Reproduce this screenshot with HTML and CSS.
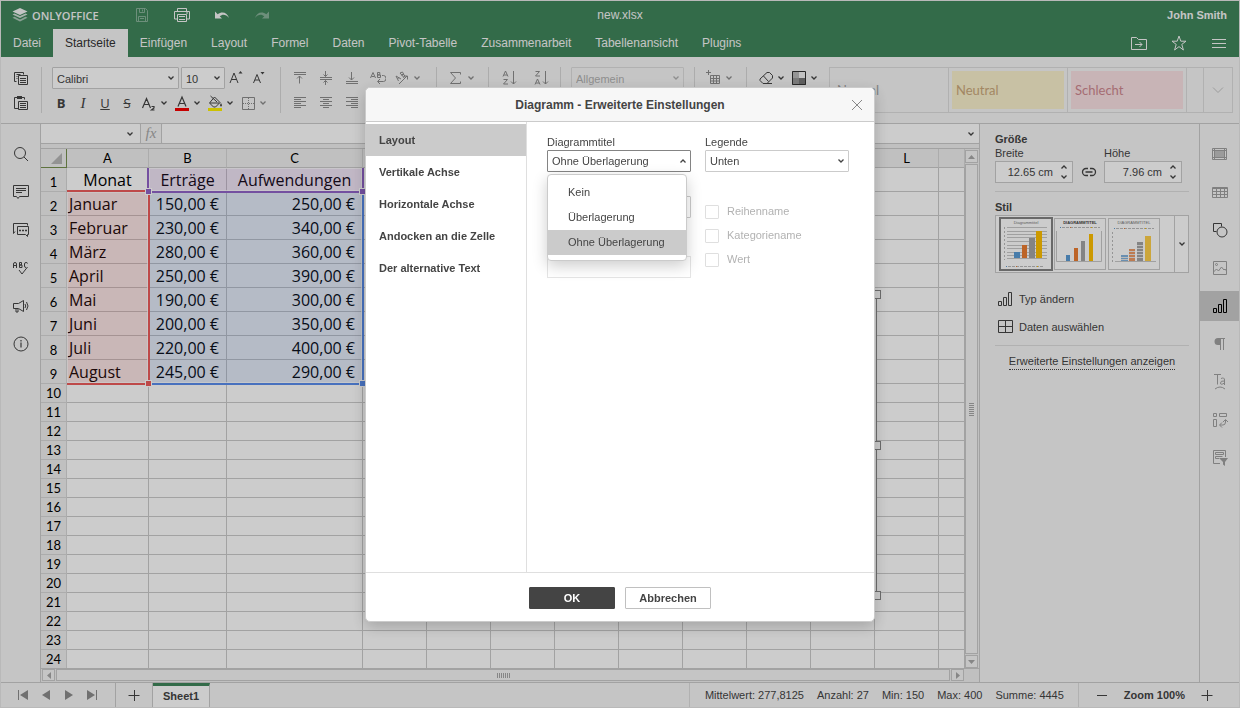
FILE: index.html
```html
<!DOCTYPE html>
<html lang="de">
<head>
    <meta charset="UTF-8">
    <title>new.xlsx</title>
    <link rel="stylesheet" href="styles.css">
</head>
<body>
    <svg class="sprite" aria-hidden="true">
        <symbol id="chev" viewBox="0 0 8 8"><path d="M1.500 2.500L4 5l2.500-2.500" fill="none" stroke="currentColor" stroke-width="1.300"/></symbol>
        <symbol id="bars" viewBox="0 0 20 20"><path d="M3.500 12.500h3v4h-3zM8.500 8.500h3v8h-3zM13.500 3.500h3v13h-3z" fill="none" stroke="currentColor"/></symbol>
    </svg>

    <div class="app">
        <header class="header">
            <div class="title_bar">
                <div class="title_left">
                    <a class="logo" href="#">
                        <svg width="16" height="16" viewBox="0 0 16 16" fill="#f7f7f7"><path d="M8 1l7.500 3.500L8 8 .5 4.500z"/><path d="M.5 7.500l2-1L8 9.100l5.500-2.600 2 1L8 11z" opacity=".8"/><path d="M.5 10.800l2-1L8 12.400l5.500-2.600 2 1L8 14.500z" opacity=".6"/></svg>
                        <span>ONLYOFFICE</span>
                    </a>
                    <button class="head_btn faded" aria-label="Speichern"><svg width="16" height="16" viewBox="0 0 16 16" fill="none" stroke="currentColor"><path d="M2.500 1.500h9l2 2v11h-11v-13zM5.500 1.500v4h5v-4M8.500 2.500v2M4.500 14.500v-5h7v5M6 11.500h4"/></svg></button>
                    <button class="head_btn" aria-label="Drucken"><svg width="18" height="16" viewBox="0 0 18 16" fill="none" stroke="currentColor"><path d="M4.500 4V1.500h9V4M4.500 12h-3V4.500h15V12h-3M4.500 7.500h9v7h-9zM6 9.500h6M6 12.500h6M13 6h2"/></svg></button>
                    <button class="head_btn" aria-label="Rückgängig"><svg width="16" height="16" viewBox="0 0 16 16" fill="currentColor"><path d="M1 4.500v7h7L5.700 9.200C8.500 6.800 12 7 15 11 13.500 5.500 8 3.800 3.700 7.200z"/></svg></button>
                    <button class="head_btn faded" aria-label="Wiederholen"><svg width="16" height="16" viewBox="0 0 16 16" fill="currentColor"><path d="M15 4.500v7H8l2.300-2.300C7.500 6.800 4 7 1 11 2.500 5.500 8 3.800 12.300 7.200z"/></svg></button>
                </div>
                <div class="doc_name">new.xlsx</div>
                <div class="user_name">John Smith</div>
            </div>
            <nav class="tabs">
                <a href="#">Datei</a>
                <a href="#" class="active">Startseite</a>
                <a href="#">Einfügen</a>
                <a href="#">Layout</a>
                <a href="#">Formel</a>
                <a href="#">Daten</a>
                <a href="#">Pivot-Tabelle</a>
                <a href="#">Zusammenarbeit</a>
                <a href="#">Tabellenansicht</a>
                <a href="#">Plugins</a>
                <div class="tabs_right">
                    <button class="head_btn" aria-label="Dateispeicherort öffnen"><svg width="18" height="16" viewBox="0 0 18 16" fill="none" stroke="currentColor"><path d="M1.500 14.500v-12h5l2 2h8v10zM5 9.500h7M9.500 7l2.500 2.500L9.500 12"/></svg></button>
                    <button class="head_btn" aria-label="Favorit"><svg width="16" height="16" viewBox="0 0 16 16" fill="none" stroke="currentColor"><path d="M8 1l1.800 5.200H15l-4.200 3.200L12.400 15 8 11.600 3.600 15l1.600-5.600L1 6.200h5.200z"/></svg></button>
                    <button class="head_btn" aria-label="Menü"><svg width="16" height="16" viewBox="0 0 16 16" fill="none" stroke="currentColor"><path d="M1 4.500h14M1 8.500h14M1 12.500h14"/></svg></button>
                </div>
            </nav>
        </header>

        <div class="toolbar">
            <div class="group group_copy">
                <div class="tb_row"><button class="tb_btn" aria-label="Kopieren"><svg width="16" height="16" viewBox="0 0 16 16" fill="none" stroke="currentColor"><path d="M3.500 11.500h-2v-9h9v2M3.500 4.500h4M3.500 6.500h1M3.500 8.500h1M5.500 5.500h9v9h-9zM7 8.500h6M7 10.500h6M7 12.500h6"/></svg></button></div>
                <div class="tb_row"><button class="tb_btn" aria-label="Einfügen"><svg width="16" height="16" viewBox="0 0 16 16" fill="none" stroke="currentColor"><path d="M5 13.500H1.500v-11h10v2M5.500 6.500h9v8h-9zM7 8.500h6M7 10.500h6M7 12.500h6"/><path d="M4 1h5v3H4z" fill="currentColor" stroke="none"/></svg></button></div>
            </div>
            <div class="group group_font">
                <div class="tb_row tb_fields">
                    <label class="combo combo_font"><select aria-label="Schriftart"><option>Calibri</option></select><svg class="chev"><use href="#chev"/></svg></label>
                    <label class="combo combo_size"><select aria-label="Schriftgröße"><option>10</option></select><svg class="chev"><use href="#chev"/></svg></label>
                    <button class="tb_btn" aria-label="Größer"><svg width="16" height="16" viewBox="0 0 16 16" fill="none" stroke="currentColor"><path d="M2 13l4-10 4 10M3.500 9.500h5"/><path d="M10.500 3.500h4l-2-2.500z" fill="currentColor" stroke="none"/></svg></button>
                    <button class="tb_btn" aria-label="Kleiner"><svg width="16" height="16" viewBox="0 0 16 16" fill="none" stroke="currentColor"><path d="M3.500 13L7 4.500l3.500 8.500M5 10h4"/><path d="M10.500 2h4l-2 2.500z" fill="currentColor" stroke="none"/></svg></button>
                </div>
                <div class="tb_row">
                    <button class="tb_btn letter"><b>B</b></button>
                    <button class="tb_btn letter serif"><i>I</i></button>
                    <button class="tb_btn letter"><u>U</u></button>
                    <button class="tb_btn letter"><s>S</s></button>
                    <button class="tb_split"><svg width="18" height="16" viewBox="2 0 18 16" fill="none" stroke="currentColor"><path d="M3.500 13l4-9.500 4 9.500M5 9.500h5M12.500 11.500h2.500v1.500l-2.500 2h3" stroke-width="1.200"/></svg><svg class="chev"><use href="#chev"/></svg></button>
                    <button class="tb_split"><svg width="16" height="16" viewBox="0 0 16 16"><path d="M4 11.500L8 2l4 9.500M5.500 8.500h5" fill="none" stroke="currentColor" stroke-width="1.200"/><path d="M1 13h14v3H1z" fill="#f80000"/></svg><svg class="chev"><use href="#chev"/></svg></button>
                    <button class="tb_split"><svg width="16" height="16" viewBox="0 0 16 16"><path d="M7.500 2l5.500 5.500-4.500 4.500H6.500L2.500 8zM3.500 1L10 7M3 8h9.500" fill="none" stroke="currentColor"/><path d="M14 8c1.500 2.500 1 3.500 0 3.500s-1.500-1 0-3.500z" fill="currentColor"/><path d="M1 13h14v3H1z" fill="#fff200"/></svg><svg class="chev"><use href="#chev"/></svg></button>
                    <button class="tb_split muted"><svg width="16" height="16" viewBox="0 0 16 16" fill="none" stroke="currentColor"><path d="M2.500 2.500h12v12h-12z"/><path d="M8.500 3v12M3 8.500h12" stroke-dasharray="1 1"/></svg><svg class="chev"><use href="#chev"/></svg></button>
                </div>
            </div>
            <div class="group group_align muted">
                <div class="tb_row">
                    <button class="tb_btn" aria-label="Oben"><svg width="14" height="14" viewBox="0 0 14 14" fill="none" stroke="currentColor"><path d="M1 1.500h12M1 3.500h12M6.500 12.500V5M4 7.500L6.500 5 9 7.500"/></svg></button>
                    <button class="tb_btn" aria-label="Mitte"><svg width="14" height="14" viewBox="0 0 14 14" fill="none" stroke="currentColor"><path d="M1 6.500h12M1 8.500h12M6.500 0v5.500M4.500 3.500l2 2 2-2M6.500 14V9.500M4.500 11.500l2-2 2 2"/></svg></button>
                    <button class="tb_btn" aria-label="Unten"><svg width="14" height="14" viewBox="0 0 14 14" fill="none" stroke="currentColor"><path d="M1 10.500h12M1 12.500h12M6.500 1v8M4 6.500L6.500 9 9 6.500"/></svg></button>
                    <button class="tb_btn" aria-label="Zeilenumbruch"><svg width="16" height="14" viewBox="0 0 16 14" fill="none" stroke="currentColor"><path d="M.5 7L3 1.500 5.500 7M1.500 5.500h3M7.500 1.500v5M7.500 1.500h2.300v2.300H7.500M7.500 4h3v2.500h-3M12 4.500h1.500a2.500 3 0 0 1 0 6H8M10 8l-2.500 2.500L10 13"/></svg></button>
                    <button class="tb_split"><svg width="16" height="14" viewBox="0 0 16 14" fill="none" stroke="currentColor"><path d="M2 5l5 3M2 5l2.500 5M5 6.500L3.500 8M6 2l3.500 4M6 2l2.500-1 1 2-2 1 2.500-.5 1 2-2 1M5 13l8-8M10 5h3.500v3.500"/></svg><svg class="chev"><use href="#chev"/></svg></button>
                </div>
                <div class="tb_row">
                    <button class="tb_btn" aria-label="Linksbündig"><svg width="14" height="14" viewBox="0 0 14 14" fill="none" stroke="currentColor"><path d="M1 1.500h12M1 3.500h7M1 5.500h12M1 7.500h7M1 9.500h12M1 11.500h7"/></svg></button>
                    <button class="tb_btn" aria-label="Zentriert"><svg width="14" height="14" viewBox="0 0 14 14" fill="none" stroke="currentColor"><path d="M1 1.500h12M4 3.500h6M1 5.500h12M4 7.500h6M1 9.500h12M4 11.500h6"/></svg></button>
                    <button class="tb_btn" aria-label="Rechtsbündig"><svg width="14" height="14" viewBox="0 0 14 14" fill="none" stroke="currentColor"><path d="M1 1.500h12M6 3.500h7M1 5.500h12M6 7.500h7M1 9.500h12M6 11.500h7"/></svg></button>
                </div>
            </div>
            <div class="group muted">
                <div class="tb_row"><button class="tb_split"><svg width="16" height="16" viewBox="0 0 16 16" fill="none" stroke="currentColor"><path d="M12.500 4.500v-2h-10l5 5.500-5 5.500h10v-2"/></svg><svg class="chev"><use href="#chev"/></svg></button></div>
            </div>
            <div class="group group_sort muted">
                <div class="tb_row">
                    <button class="tb_btn" aria-label="Aufsteigend"><svg width="16" height="16" viewBox="0 0 16 16" fill="none" stroke="currentColor"><path d="M2 6.500L4.500 1 7 6.500M3 5h3M2.500 9.500h4L2.500 14h4.500M12.500 1v13M10 11.500l2.500 2.500 2.500-2.500"/></svg></button>
                    <button class="tb_btn" aria-label="Absteigend"><svg width="16" height="16" viewBox="0 0 16 16" fill="none" stroke="currentColor"><path d="M2.500 1.500h4L2.500 6H7M2 14.500L4.500 9 7 14.500M3 13h3M12.500 1v13M10 11.500l2.500 2.500 2.500-2.500"/></svg></button>
                </div>
            </div>
            <div class="group group_format muted">
                <div class="tb_row"><label class="combo combo_format"><select aria-label="Zahlenformat" disabled><option>Allgemein</option></select><svg class="chev"><use href="#chev"/></svg></label></div>
            </div>
            <div class="group muted">
                <div class="tb_row"><button class="tb_split"><svg width="16" height="16" viewBox="0 0 16 16" fill="none" stroke="currentColor"><path d="M4.500 5.500h9v8h-9zM4.500 8.500h9M4.500 11h9M7.500 5.500v8M10.500 5.500v8M2.500 0v5M0 2.500h5"/></svg><svg class="chev"><use href="#chev"/></svg></button></div>
            </div>
            <div class="group group_last">
                <div class="tb_row">
                    <button class="tb_split"><svg width="16" height="16" viewBox="0 0 16 16" fill="none" stroke="currentColor"><path d="M9 2.500h2.500l3 3V8L9 13.500H5l-3-3V9zM5.500 6l5 5.500M5 13.500h9"/></svg><svg class="chev"><use href="#chev"/></svg></button>
                    <button class="tb_split"><svg width="16" height="16" viewBox="0 0 16 16"><path d="M1 1h14v14H1z" fill="#f3f3f3"/><path d="M1 1h7v7H1z" fill="#bbb"/><path d="M1 8h7v7H1z" fill="#999"/><path d="M8 8h7v7H8z" fill="#777"/><path d="M1.500 1.500h13v13h-13z" fill="none" stroke="#333"/></svg><svg class="chev"><use href="#chev"/></svg></button>
                </div>
            </div>
            <div class="gallery">
                <div class="style_item"><span class="style_normal">Normal</span></div>
                <div class="style_item"><span class="style_neutral">Neutral</span></div>
                <div class="style_item"><span class="style_bad">Schlecht</span></div>
                <div class="style_rest"></div>
                <button class="gallery_more" aria-label="Mehr"><svg width="14" height="14" viewBox="0 0 14 14" fill="none" stroke="currentColor"><path d="M2 4.500l5 5 5-5"/></svg></button>
            </div>
        </div>

        <div class="main">
            <aside class="rail rail_left">
                <button class="rail_btn" aria-label="Suchen"><svg width="18" height="18" viewBox="0 0 18 18" fill="none" stroke="currentColor"><circle cx="8" cy="8" r="5.500"/><path d="M12 12l4 4"/></svg></button>
                <button class="rail_btn" aria-label="Kommentare"><svg width="18" height="18" viewBox="0 0 18 18" fill="none" stroke="currentColor"><path d="M1.500 2.500h15v11h-9L6 15.500l-1.500-2h-3zM4 5.500h10M4 7.500h10M4 9.500h6"/></svg></button>
                <button class="rail_btn" aria-label="Chat"><svg width="18" height="18" viewBox="0 0 18 18" fill="none" stroke="currentColor"><path d="M3 10.500l-1.500 2v-10h14v2M5.500 5.500h11v8h-1v2l-2-2h-8z"/><path d="M7 9.500h2M10 9.500h2M13 9.500h2" stroke-width="1.500"/></svg></button>
                <button class="rail_btn" aria-label="Rechtschreibung"><svg width="18" height="18" viewBox="0 0 18 18" fill="none" stroke="currentColor"><path d="M1.500 9V5q0-1.500 1.500-1.500T4.500 5v4M1.500 6.500h3M7.500 3.500V8.500H10V6H7.500 9.500V3.500zM15.500 4.500q0-1-1.500-1T12.500 5v2q0 1.500 1.500 1.500M7 11l3 4 5.500-7"/></svg></button>
                <button class="rail_btn" aria-label="Feedback"><svg width="18" height="18" viewBox="0 0 18 18" fill="none" stroke="currentColor"><path d="M1.500 6.500h5l5-3v11l-5-3h-5zM4 12v3h2v-3M13 7q1.500 2 0 4M14.500 5q3 4 0 8"/></svg></button>
                <button class="rail_btn" aria-label="Info"><svg width="18" height="18" viewBox="0 0 18 18" fill="none" stroke="currentColor"><circle cx="9" cy="9" r="7"/><path d="M9 7.500v5M9 5v1.500" stroke-width="1.200"/></svg></button>
            </aside>

            <section class="editor">
                <div class="formula_bar">
                    <label class="combo name_box"><input type="text" aria-label="Namensfeld"><svg class="chev"><use href="#chev"/></svg></label>
                    <button class="fx">fx</button>
                    <label class="combo formula"><input type="text" aria-label="Formel"><svg class="chev"><use href="#chev"/></svg></label>
                </div>
                <div class="sheet_area">
                    <div class="sheet">
                        <table>
                            <colgroup><col class="col_num"><col class="col_a"><col class="col_b"><col class="col_c"><col class="col_std"><col class="col_std"><col class="col_std"><col class="col_std"><col class="col_std"><col class="col_std"><col class="col_std"><col class="col_std"><col class="col_std"><col></colgroup>
                            <tr class="head_row"><th class="corner"><svg width="11" height="11" viewBox="0 0 11 11"><path d="M11 0v11H0z" fill="#b8b8b8"/></svg></th><th>A</th><th>B</th><th>C</th><th>D</th><th>E</th><th>F</th><th>G</th><th>H</th><th>I</th><th>J</th><th>K</th><th>L</th><th></th></tr>
                            <tr class="data"><th>1</th><td class="center">Monat</td><td class="center">Erträge</td><td class="center">Aufwendungen</td><td></td><td></td><td></td><td></td><td></td><td></td><td></td><td></td><td></td><td></td></tr>
                            <tr class="data"><th>2</th><td>Januar</td><td class="num">150,00 €</td><td class="num">250,00 €</td><td></td><td></td><td></td><td></td><td></td><td></td><td></td><td></td><td></td><td></td></tr>
                            <tr class="data"><th>3</th><td>Februar</td><td class="num">230,00 €</td><td class="num">340,00 €</td><td></td><td></td><td></td><td></td><td></td><td></td><td></td><td></td><td></td><td></td></tr>
                            <tr class="data"><th>4</th><td>März</td><td class="num">280,00 €</td><td class="num">360,00 €</td><td></td><td></td><td></td><td></td><td></td><td></td><td></td><td></td><td></td><td></td></tr>
                            <tr class="data"><th>5</th><td>April</td><td class="num">250,00 €</td><td class="num">390,00 €</td><td></td><td></td><td></td><td></td><td></td><td></td><td></td><td></td><td></td><td></td></tr>
                            <tr class="data"><th>6</th><td>Mai</td><td class="num">190,00 €</td><td class="num">300,00 €</td><td></td><td></td><td></td><td></td><td></td><td></td><td></td><td></td><td></td><td></td></tr>
                            <tr class="data"><th>7</th><td>Juni</td><td class="num">200,00 €</td><td class="num">350,00 €</td><td></td><td></td><td></td><td></td><td></td><td></td><td></td><td></td><td></td><td></td></tr>
                            <tr class="data"><th>8</th><td>Juli</td><td class="num">220,00 €</td><td class="num">400,00 €</td><td></td><td></td><td></td><td></td><td></td><td></td><td></td><td></td><td></td><td></td></tr>
                            <tr class="data"><th>9</th><td>August</td><td class="num">245,00 €</td><td class="num">290,00 €</td><td></td><td></td><td></td><td></td><td></td><td></td><td></td><td></td><td></td><td></td></tr>
                            <tr><th>10</th><td></td><td></td><td></td><td></td><td></td><td></td><td></td><td></td><td></td><td></td><td></td><td></td><td></td></tr>
                            <tr><th>11</th><td></td><td></td><td></td><td></td><td></td><td></td><td></td><td></td><td></td><td></td><td></td><td></td><td></td></tr>
                            <tr><th>12</th><td></td><td></td><td></td><td></td><td></td><td></td><td></td><td></td><td></td><td></td><td></td><td></td><td></td></tr>
                            <tr><th>13</th><td></td><td></td><td></td><td></td><td></td><td></td><td></td><td></td><td></td><td></td><td></td><td></td><td></td></tr>
                            <tr><th>14</th><td></td><td></td><td></td><td></td><td></td><td></td><td></td><td></td><td></td><td></td><td></td><td></td><td></td></tr>
                            <tr><th>15</th><td></td><td></td><td></td><td></td><td></td><td></td><td></td><td></td><td></td><td></td><td></td><td></td><td></td></tr>
                            <tr><th>16</th><td></td><td></td><td></td><td></td><td></td><td></td><td></td><td></td><td></td><td></td><td></td><td></td><td></td></tr>
                            <tr><th>17</th><td></td><td></td><td></td><td></td><td></td><td></td><td></td><td></td><td></td><td></td><td></td><td></td><td></td></tr>
                            <tr><th>18</th><td></td><td></td><td></td><td></td><td></td><td></td><td></td><td></td><td></td><td></td><td></td><td></td><td></td></tr>
                            <tr><th>19</th><td></td><td></td><td></td><td></td><td></td><td></td><td></td><td></td><td></td><td></td><td></td><td></td><td></td></tr>
                            <tr><th>20</th><td></td><td></td><td></td><td></td><td></td><td></td><td></td><td></td><td></td><td></td><td></td><td></td><td></td></tr>
                            <tr><th>21</th><td></td><td></td><td></td><td></td><td></td><td></td><td></td><td></td><td></td><td></td><td></td><td></td><td></td></tr>
                            <tr><th>22</th><td></td><td></td><td></td><td></td><td></td><td></td><td></td><td></td><td></td><td></td><td></td><td></td><td></td></tr>
                            <tr><th>23</th><td></td><td></td><td></td><td></td><td></td><td></td><td></td><td></td><td></td><td></td><td></td><td></td><td></td></tr>
                            <tr><th>24</th><td></td><td></td><td></td><td></td><td></td><td></td><td></td><td></td><td></td><td></td><td></td><td></td><td></td></tr>
                        </table>
                        <!-- chart source ranges -->
                        <div class="range range_values"></div>
                        <div class="range range_cats"></div>
                        <div class="range range_names"><i class="handle"></i></div>
                        <div class="chart_frame"><i></i><i></i><i></i></div>
                    </div>
                    <div class="vscroll">
                        <button aria-label="Nach oben"><svg width="7" height="4" viewBox="0 0 7 4"><path d="M0 4l3.500-4L7 4z" fill="currentColor"/></svg></button>
                        <div class="thumb"><svg width="5" height="13" viewBox="0 0 5 13" stroke="currentColor"><path d="M0 .5h5M0 2.500h5M0 4.500h5M0 6.500h5M0 8.500h5M0 10.500h5M0 12.500h5"/></svg></div>
                        <button aria-label="Nach unten"><svg width="7" height="4" viewBox="0 0 7 4"><path d="M0 0l3.500 4L7 0z" fill="currentColor"/></svg></button>
                    </div>
                </div>
                <div class="hscroll">
                    <button aria-label="Nach links"><svg width="4" height="7" viewBox="0 0 4 7"><path d="M4 0L0 3.500 4 7z" fill="currentColor"/></svg></button>
                    <div class="thumb"><svg width="13" height="5" viewBox="0 0 13 5" stroke="currentColor"><path d="M.5 0v5M2.500 0v5M4.500 0v5M6.500 0v5M8.500 0v5M10.500 0v5M12.500 0v5"/></svg></div>
                    <button aria-label="Nach rechts"><svg width="4" height="7" viewBox="0 0 4 7"><path d="M0 0l4 3.500L0 7z" fill="currentColor"/></svg></button>
                </div>
            </section>

            <aside class="panel">
                <h2>Größe</h2>
                <div class="size_row">
                    <div class="size_field">
                        <label for="chartWidth">Breite</label>
                        <div class="spinner"><input id="chartWidth" type="text" value="12.65 cm"><span class="arrows"><svg class="chev up"><use href="#chev"/></svg><svg class="chev"><use href="#chev"/></svg></span></div>
                    </div>
                    <button class="link_btn" aria-label="Seitenverhältnis"><svg width="16" height="10" viewBox="0 0 16 10" fill="none" stroke="currentColor" stroke-width="1.300"><path d="M7 1.500H5a3.500 3.500 0 0 0 0 7h2M9 1.500h2a3.500 3.500 0 0 1 0 7H9M4.500 5h7"/></svg></button>
                    <div class="size_field">
                        <label for="chartHeight">Höhe</label>
                        <div class="spinner"><input id="chartHeight" type="text" value="7.96 cm"><span class="arrows"><svg class="chev up"><use href="#chev"/></svg><svg class="chev"><use href="#chev"/></svg></span></div>
                    </div>
                </div>
                <hr>
                <h2>Stil</h2>
                <div class="chart_styles">
                    <button class="chart_thumb active" aria-label="Stil 1"><svg width="50" height="50" viewBox="2 2 50 50">
                        <path d="M8 10.500h40M8 14.500h40M8 17.500h40M8 20.500h40M8 24.500h40M8 28.500h40M8 31.500h40M8 35.500h40M8 38.500h40M8 41.500h40" stroke="#c8c8c8"/>
                        <path d="M5.500 10v33" stroke="#bbb" stroke-dasharray="2 2"/>
                        <text x="27" y="7" class="tiny">Diagrammtitel</text>
                        <path d="M15 35h6v6h-6z" fill="#5b9bd5"/><path d="M23 28h5v13h-5z" fill="#ed7d31"/><path d="M30 21h6v20h-6z" fill="#a5a5a5"/><path d="M37 14h6v27h-6z" fill="#ffc000"/>
                        <path d="M9 49.500h36" stroke="#bbb" stroke-dasharray="3 1"/><path d="M7 49h1v1H7z" fill="#5b9bd5"/><path d="M17 49h1v1h-1z" fill="#ed7d31"/><path d="M38 49h1v1h-1z" fill="#ffc000"/></svg></button>
                    <button class="chart_thumb" aria-label="Stil 2"><svg width="50" height="50" viewBox="1 1 50 50">
                        <path d="M2.500 13v30.500h45V13" fill="none" stroke="#c8c8c8"/>
                        <text x="26" y="6" class="tiny bold">DIAGRAMMTITEL</text>
                        <path d="M8 9.500h38" stroke="#bbb" stroke-dasharray="3 1"/><path d="M6 9h1v1H6z" fill="#5b9bd5"/><path d="M16 9h1v1h-1z" fill="#ed7d31"/><path d="M37 9h1v1h-1z" fill="#ffc000"/>
                        <path d="M12 37h4v6h-4z" fill="#5b9bd5"/><path d="M20 30h4v13h-4z" fill="#ed7d31"/><path d="M27 23h4v20h-4z" fill="#a5a5a5"/><path d="M35 16h4v27h-4z" fill="#ffc000"/></svg></button>
                    <button class="chart_thumb" aria-label="Stil 3"><svg width="50" height="50" viewBox="1 1 50 50">
                        <path d="M7 43.500h41" stroke="#c8c8c8"/><path d="M4.500 14v30" stroke="#bbb" stroke-dasharray="2 2"/>
                        <text x="26" y="6" class="tiny">DIAGRAMMTITEL</text>
                        <path d="M8 10.500h38" stroke="#bbb" stroke-dasharray="3 1"/><path d="M6 10h1v1H6z" fill="#5b9bd5"/><path d="M16 10h1v1h-1z" fill="#ed7d31"/><path d="M37 10h1v1h-1z" fill="#ffc000"/>
                        <path d="M13 37h7v6h-7z" fill="#84b3de"/><path d="M21 31h6v12h-6z" fill="#ed9a66"/><path d="M29 24h6v19h-6z" fill="#a5a5a5"/><path d="M37 18h6v25h-6z" fill="#ffd04a"/>
                        <path d="M13 39.500h7M13 41.500h7M21 33.500h6M21 36.500h6M21 39.500h6M29 27.500h6M29 30.500h6M29 33.500h6M29 36.500h6M29 39.500h6" stroke="#e8e8e8"/></svg></button>
                    <button class="styles_more" aria-label="Weitere Stile"><svg class="chev"><use href="#chev"/></svg></button>
                </div>
                <button class="panel_btn"><svg width="20" height="20"><use href="#bars"/></svg>Typ ändern</button>
                <button class="panel_btn"><svg width="20" height="20" viewBox="0 0 20 20" fill="none" stroke="currentColor"><path d="M3.500 3.500h14v12h-14zM3.500 9.500h14M10.500 3.500v12"/></svg>Daten auswählen</button>
                <hr>
                <a class="more_link" href="#">Erweiterte Einstellungen anzeigen</a>
            </aside>

            <aside class="rail rail_right">
                <button class="rail_btn" aria-label="Zelle"><svg width="18" height="18" viewBox="0 0 18 18" fill="none" stroke="currentColor"><path d="M1.500 3.500h14v11h-14zM1.500 5.500h14M1.500 12.500h14M3.500 3.500v11M13.500 3.500v11"/><path d="M4 6h9v6H4z" fill="currentColor" opacity=".6"/></svg></button>
                <button class="rail_btn" aria-label="Tabelle"><svg width="18" height="18" viewBox="0 0 18 18" fill="none" stroke="currentColor"><path d="M1.500 4.500h15v10h-15zM1.500 5.500h15M1.500 8.500h15M1.500 11.500h15M5.500 4.500v10M9.500 4.500v10M13.500 4.500v10"/></svg></button>
                <button class="rail_btn dark" aria-label="Form"><svg width="18" height="18" viewBox="0 0 18 18" fill="none" stroke="currentColor"><path d="M5.500 10.500h-3v-8h8v3"/><circle cx="11" cy="11" r="5"/></svg></button>
                <button class="rail_btn" aria-label="Bild"><svg width="18" height="18" viewBox="0 0 18 18" fill="none" stroke="currentColor"><path d="M2.500 2.500h13v13h-13zM2.500 13l3-3 2 2 3-4 2.500 3 1-1 1.500 2"/><circle cx="5.500" cy="5.500" r="1"/></svg></button>
                <button class="rail_btn active" aria-label="Diagramm"><svg width="20" height="20"><use href="#bars"/></svg></button>
                <button class="rail_btn" aria-label="Absatz"><svg width="18" height="18" viewBox="0 0 18 18"><path d="M7 3h7v1h-1v11h-1V4h-2v11H9V10H7a3.500 3.500 0 0 1 0-7z" fill="currentColor"/></svg></button>
                <button class="rail_btn" aria-label="TextArt"><svg width="18" height="18" viewBox="0 0 18 18" fill="none" stroke="currentColor"><path d="M3 1.500h7M6.500 1.500v10M10 5.500q3.500-1.500 3.500 1.500v5M13.500 8q-4-.5-4 2t4 0M4 16q5-4 10 0"/></svg></button>
                <button class="rail_btn" aria-label="Pivot"><svg width="18" height="18" viewBox="0 0 18 18" fill="none" stroke="currentColor"><path d="M2.500 2.500h3v3h-3zM8.500 2.500h7v3h-7zM2.500 8.500h3v7h-3zM9 14h3q2.500 0 2.500-3V9M12 11l2.500-2.500L17 11M11 11.500L8.500 14l2.500 2.500"/></svg></button>
                <button class="rail_btn" aria-label="Datenschnitt"><svg width="18" height="18" viewBox="0 0 18 18" fill="none" stroke="currentColor"><path d="M9 14.500H2.500v-13h12V8M4.500 3.500h8v2h-8zM8 9.500H4.500v-2h7"/><path d="M8 9h9l-3 4v4l-2-1.500V13z" fill="currentColor" stroke="none"/></svg></button>
            </aside>
        </div>

        <footer class="status">
            <div class="sheet_nav">
                <button aria-label="Erstes Blatt"><svg width="10" height="10" viewBox="0 0 10 10" fill="currentColor"><path d="M0 0h1v10H0zM10 0v10L2 5z"/></svg></button>
                <button aria-label="Vorheriges Blatt"><svg width="10" height="10" viewBox="0 0 10 10" fill="currentColor"><path d="M9 0v10L1 5z"/></svg></button>
                <button aria-label="Nächstes Blatt"><svg width="10" height="10" viewBox="0 0 10 10" fill="currentColor"><path d="M1 0v10l8-5z"/></svg></button>
                <button aria-label="Letztes Blatt"><svg width="10" height="10" viewBox="0 0 10 10" fill="currentColor"><path d="M9 0h1v10H9zM0 0v10l8-5z"/></svg></button>
            </div>
            <button class="sheet_add" aria-label="Blatt hinzufügen"><svg width="12" height="12" viewBox="0 0 12 12" stroke="currentColor"><path d="M.5 6.500h11M6.500 1v11"/></svg></button>
            <button class="sheet_tab">Sheet1</button>
            <div class="stats">
                <span>Mittelwert: 277,8125</span>
                <span>Anzahl: 27</span>
                <span>Min: 150</span>
                <span>Max: 400</span>
                <span>Summe: 4445</span>
            </div>
            <div class="zoom">
                <button aria-label="Verkleinern"><svg width="12" height="12" viewBox="0 0 12 12" stroke="currentColor"><path d="M1 6.500h10"/></svg></button>
                <b>Zoom 100%</b>
                <button aria-label="Vergrößern"><svg width="12" height="12" viewBox="0 0 12 12" stroke="currentColor"><path d="M.5 6.500h11M6.500 1v11"/></svg></button>
            </div>
        </footer>
    </div>

    <div class="backdrop">
        <div class="dialog" role="dialog" aria-labelledby="dialogTitle">
            <div class="dialog_head">
                <h1 id="dialogTitle">Diagramm - Erweiterte Einstellungen</h1>
                <button class="close" aria-label="Schließen"><svg width="12" height="12" viewBox="0 0 12 12" stroke="currentColor"><path d="M1 1l10 10M11 1L1 11"/></svg></button>
            </div>
            <div class="dialog_body">
                <nav class="dialog_menu">
                    <button class="active">Layout</button>
                    <button>Vertikale Achse</button>
                    <button>Horizontale Achse</button>
                    <button>Andocken an die Zelle</button>
                    <button>Der alternative Text</button>
                </nav>
                <div class="dialog_content">
                    <div class="column">
                        <label for="chartTitle">Diagrammtitel</label>
                        <div class="combo open">
                            <select id="chartTitle"><option>Ohne Überlagerung</option></select>
                            <svg class="chev up"><use href="#chev"/></svg>
                            <ul class="dropdown">
                                <li>Kein</li>
                                <li>Überlagerung</li>
                                <li class="selected">Ohne Überlagerung</li>
                            </ul>
                        </div>
                        <div class="combo labels_pos"><select aria-label="Datenbeschriftungen"><option></option></select></div>
                        <input class="separator" type="text" aria-label="Trennzeichen" disabled>
                    </div>
                    <div class="column">
                        <label for="legend">Legende</label>
                        <div class="combo">
                            <select id="legend"><option>Unten</option></select>
                            <svg class="chev"><use href="#chev"/></svg>
                        </div>
                        <div class="checks">
                            <label><input type="checkbox" disabled>Reihenname</label>
                            <label><input type="checkbox" disabled>Kategoriename</label>
                            <label><input type="checkbox" disabled>Wert</label>
                        </div>
                    </div>
                </div>
            </div>
            <div class="dialog_foot">
                <button class="btn primary">OK</button>
                <button class="btn">Abbrechen</button>
            </div>
        </div>
    </div>
</body>
</html>
```
FILE: styles.css
```css
* {
    box-sizing: border-box;
}

body {
    margin: 0;
    font-family: "Liberation Sans", Arial, sans-serif;
    font-size: 11px;
    color: #444;
}

button, input, select {
    font: inherit;
    color: inherit;
    background: none;
    border: none;
    border-radius: 0;
    margin: 0;
    padding: 0;
}

select {
    appearance: none;
}

svg {
    display: block;
    flex: none;
}

h1, h2, ul {
    margin: 0;
    padding: 0;
}

.sprite {
    position: absolute;
    width: 0;
    height: 0;
}

.chev {
    width: 8px;
    height: 8px;
}

.up {
    transform: scaleY(-1);
}

.app {
    display: flex;
    flex-direction: column;
    height: 100vh;
    overflow: hidden;
    background: #f7f7f7;
    border: 1px solid #e8e8e8;
}

/* header */
.header {
    background: #40865c;
    color: #f7f7f7;
    font-size: 12px;
}

.title_bar {
    display: grid;
    grid-template-columns: 1fr auto 1fr;
    align-items: center;
    height: 28px;
}

.title_left {
    display: flex;
    align-items: center;
}

.logo {
    display: flex;
    align-items: center;
    gap: 4px;
    width: 121px;
    padding-left: 11px;
    color: #f7f7f7;
    font-family: "Open Sans", sans-serif;
    font-size: 11px;
    font-weight: 600;
    text-decoration: none;
}

.head_btn {
    display: flex;
    align-items: center;
    justify-content: center;
    width: 40px;
    height: 28px;
}

.faded {
    opacity: .4;
}

.user_name {
    padding-right: 12px;
    font-size: 11px;
    font-weight: bold;
    text-align: right;
}

.tabs {
    display: flex;
    height: 28px;
}

.tabs a {
    padding: 0 12px;
    line-height: 28px;
    color: #f7f7f7;
    text-decoration: none;
}

.tabs a.active {
    background: #f7f7f7;
    color: #333;
}

.tabs_right {
    display: flex;
    margin-left: auto;
}

/* toolbar */
.toolbar {
    display: flex;
    align-items: flex-start;
    height: 67px;
    padding: 10px 6px 0 0;
    border-bottom: 1px solid #cbcbcb;
}

.group {
    display: flex;
    flex-direction: column;
    gap: 3px;
    height: 46px;
    padding: 0 10px 0 8px;
    border-right: 1px solid #d8d8d8;
}

.group_copy {
    padding: 0 9px;
}

.group_align {
    padding: 0 12px 0 6px;
}

.group_align .tb_btn {
    width: 26px;
}

.group_sort {
    padding: 0 8px 0 9px;
}

.group_sort .tb_row {
    gap: 10px;
}

.group_format {
    padding: 0 10px;
}

.group_last {
    padding-right: 8px;
    border-right: none;
}

.tb_row {
    display: flex;
    align-items: center;
    height: 22px;
}

.tb_fields {
    padding-left: 2px;
}

.combo_font {
    width: 127px;
    margin-right: 2px;
}

.combo_size {
    width: 44px;
}

.combo_format {
    width: 113px;
}

.tb_btn {
    display: flex;
    align-items: center;
    justify-content: center;
    width: 22px;
    height: 22px;
}

.tb_split {
    display: flex;
    align-items: center;
    justify-content: space-between;
    width: 33px;
    height: 22px;
    padding: 0 3px;
}

.letter {
    font-family: "Open Sans", sans-serif;
    font-size: 13px;
}

.serif {
    font-family: "Liberation Serif", serif;
    font-size: 15px;
}

.muted {
    color: #8c8c8c;
}

.combo {
    position: relative;
    display: flex;
    align-items: center;
    height: 22px;
    background: #fff;
    border: 1px solid #cbcbcb;
    border-radius: 1px;
}

.combo select, .combo input {
    width: 100%;
    height: 100%;
    padding: 1px 4px 0;
    opacity: 1;
}

.combo .chev {
    position: absolute;
    right: 3px;
    pointer-events: none;
}

.muted .combo {
    background: #f7f7f7;
    border-color: #dedede;
    color: #b2b2b2;
}

.gallery {
    display: flex;
    flex: 1;
    height: 46px;
    border: 1px solid #dedede;
    font-family: Lato, sans-serif;
    font-size: 13px;
}

.style_item {
    display: flex;
    width: 119px;
    padding: 3px;
    border-right: 1px solid #dedede;
}

.style_item span {
    flex: 1;
    padding-left: 4px;
    line-height: 38px;
}

.style_normal {
    color: #a0a0a0;
}

.style_neutral {
    background: #fbf2cd;
    color: #cba97c;
}

.style_bad {
    background: #fbe2e4;
    color: #cf8890;
}

.style_rest {
    flex: 1;
}

.gallery_more {
    display: flex;
    align-items: center;
    justify-content: center;
    width: 29px;
    border-left: 1px solid #dedede;
    color: #c4c4c4;
}

/* workspace */
.main {
    display: flex;
    flex: 1;
    min-height: 0;
}

.rail {
    display: flex;
    flex-direction: column;
    gap: 8px;
    width: 40px;
    padding-top: 15px;
}

.rail_left {
    border-right: 1px solid #cbcbcb;
}

.rail_right {
    border-left: 1px solid #cbcbcb;
    color: #a0a0a0;
}

.rail_btn {
    display: flex;
    align-items: center;
    justify-content: center;
    height: 30px;
}

.rail_btn.dark {
    color: #444;
}

.rail_btn.active {
    background: #cbcbcb;
    color: #000;
}

.editor {
    display: flex;
    flex-direction: column;
    flex: 1;
    min-width: 0;
    background: #f0f0f0;
}

.formula_bar {
    display: flex;
    height: 20px;
    margin-bottom: 4px;
    border-bottom: 1px solid #cbcbcb;
}

.formula_bar .combo {
    height: 19px;
    border: none;
}

.name_box {
    width: 99px;
}

.fx {
    width: 22px;
    border: solid #cbcbcb;
    border-width: 0 1px;
    background: #f7f7f7;
    color: #a8a8a8;
    font-family: "Liberation Serif", serif;
    font-size: 15px;
    font-style: italic;
}

.formula {
    flex: 1;
}

.formula .chev {
    right: 4px;
}

.name_box .chev {
    right: 6px;
}

.sheet_area {
    display: flex;
    flex: 1;
    min-height: 0;
    border-top: 1px solid #cbcbcb;
}

.sheet {
    position: relative;
    flex: 1;
    min-width: 0;
    overflow: hidden;
    background: #fff;
}

table {
    width: 100%;
    table-layout: fixed;
    border-spacing: 0;
}

.col_num {
    width: 26px;
}

.col_a {
    width: 82px;
}

.col_b {
    width: 78px;
}

.col_c {
    width: 136px;
}

.col_std {
    width: 64px;
}

tr {
    height: 19px;
}

tr.data {
    height: 24px;
}

th, td {
    padding: 0;
    border: solid #cbcbcb;
    border-width: 0 1px 1px 0;
    color: #000;
}

th {
    background: #f0f0f0;
    border-color: #d8d8d8;
    font-family: Lato, sans-serif;
    font-size: 13px;
    font-weight: normal;
    line-height: 18px;
}

.data th {
    padding-top: 4px;
}

.head_row th {
    border-bottom-color: #cbcbcb;
}

.head_row .corner {
    padding-left: 10px;
    border-color: #76904e;
}

td {
    font-family: "Open Sans", "Noto Sans", sans-serif;
    font-size: 16px;
    line-height: 18px;
    white-space: nowrap;
}

.data td {
    padding: 1px 2px 0 2px;
    line-height: 22px;
}

.data .center {
    text-align: center;
}

.data .num {
    padding-right: 7px;
    text-align: right;
}

/* highlighted source ranges, drawn over the cells */
.range {
    position: absolute;
    border: 2px solid;
    box-shadow: inset 0 0 0 1px rgba(255, 255, 255, .7);
}

.range_values {
    left: 107px;
    top: 42px;
    width: 216px;
    height: 194px;
    border-color: #5a8eee;
    border-top: none;
    border-left: none;
    background: rgba(64, 113, 205, .15);
}

.range_cats {
    left: 26px;
    top: 41px;
    width: 83px;
    height: 195px;
    border-color: #ee5c5c;
    border-left: none;
    background: rgba(238, 80, 80, .15);
}

.range_names {
    left: 106px;
    top: 19px;
    width: 217px;
    height: 25px;
    border-color: #9164c8;
    border-top: none;
    background: rgba(160, 80, 200, .15);
}

.range::after, .handle {
    content: "";
    position: absolute;
    right: -3px;
    bottom: -3px;
    width: 5px;
    height: 5px;
    background: #5a8eee;
    outline: 1px solid #fff;
}

.range_cats::after {
    background: #ee5c5c;
}

.range_names::after, .handle {
    background: #9164c8;
}

.range .handle {
    right: auto;
    left: -3px;
}

.chart_frame {
    position: absolute;
    left: 349px;
    top: 145px;
    display: flex;
    flex-direction: column;
    align-items: flex-end;
    justify-content: space-between;
    width: 487px;
    height: 302px;
    background: #fff;
    border: 1px solid #888;
}

.chart_frame i {
    width: 9px;
    height: 9px;
    margin: -5px;
    background: #fff;
    border: 1px solid #888;
}

.vscroll, .hscroll {
    display: flex;
    gap: 1px;
    color: #a8a8a8;
}

.vscroll {
    flex-direction: column;
    width: 14px;
    padding: 1px 1px 0 0;
}

.hscroll {
    height: 14px;
    padding: 0 15px 1px 1px;
    border-top: 1px solid #cbcbcb;
}

.vscroll button, .hscroll button, .thumb {
    display: flex;
    align-items: center;
    justify-content: center;
    border: 1px solid #cbcbcb;
    background: #f7f7f7;
}

.vscroll button {
    height: 13px;
}

.hscroll button {
    width: 13px;
}

.thumb {
    flex: 1;
}

/* right panel */
.panel {
    width: 220px;
    padding: 8px 10px 0 15px;
    border-left: 1px solid #cbcbcb;
}

.panel h2 {
    font-size: 11px;
    line-height: 14px;
}

.size_row {
    display: flex;
    align-items: flex-end;
}

.size_field {
    display: flex;
    flex-direction: column;
    width: 78px;
    line-height: 14px;
}

.spinner {
    display: flex;
    height: 22px;
    margin-top: 1px;
    background: #fff;
    border: 1px solid #cbcbcb;
}

.spinner input {
    flex: 1;
    min-width: 0;
    text-align: right;
}

.arrows {
    display: flex;
    flex-direction: column;
    justify-content: space-between;
    padding: 1px 4px 1px 7px;
}

.link_btn {
    display: flex;
    align-items: center;
    justify-content: center;
    width: 31px;
    height: 22px;
}

.panel hr {
    margin: 8px 0;
    border: none;
    border-top: 1px solid #dedede;
}

.panel .panel_btn + hr {
    margin-top: 4px;
}

.chart_styles {
    display: flex;
    align-items: center;
    height: 58px;
    margin: 1px 0 12px;
    padding-left: 3px;
    background: #fff;
    border: 1px solid #cbcbcb;
}

.chart_thumb {
    margin-right: 2px;
    border: 1px solid #cbcbcb;
    background: #fff;
}

.chart_thumb.active {
    margin-right: 1px;
    border: 2px solid #848484;
}

.tiny {
    font-size: 4px;
    fill: #777;
    text-anchor: middle;
}

.tiny.bold {
    font-weight: bold;
    fill: #444;
}

.styles_more {
    display: flex;
    align-items: center;
    justify-content: center;
    width: 14px;
    height: 100%;
    margin-left: auto;
    border-left: 1px solid #cbcbcb;
}

.panel_btn {
    display: flex;
    align-items: center;
    gap: 4px;
    height: 28px;
}

.panel .more_link {
    display: table;
    margin: 0 auto;
    border-bottom: 1px dotted #444;
    color: #444;
    line-height: 15px;
    text-decoration: none;
}

/* status bar */
.status {
    display: flex;
    align-items: stretch;
    height: 25px;
    border-top: 1px solid #cbcbcb;
}

.status button {
    display: flex;
    align-items: center;
    justify-content: center;
}

.sheet_nav {
    display: flex;
    width: 115px;
    padding-left: 10px;
    border-right: 1px solid #cbcbcb;
    color: #8c8c8c;
}

.sheet_nav button {
    width: 23px;
}

.status .sheet_add {
    width: 37px;
    border-right: 1px solid #cbcbcb;
}

.status .sheet_tab {
    width: 57px;
    padding-bottom: 2px;
    border-top: 3px solid #40865c;
    border-right: 1px solid #cbcbcb;
    background: #fff;
    font-weight: bold;
}

.stats {
    display: flex;
    align-items: center;
    gap: 13px;
    margin-left: auto;
    padding: 0 14px 0 15px;
    border-left: 1px solid #dedede;
}

.zoom {
    display: flex;
    align-items: center;
    gap: 16px;
    padding: 0 26px 0 17px;
    border-left: 1px solid #dedede;
}

/* dialog */
.backdrop {
    position: fixed;
    inset: 0;
    display: flex;
    align-items: center;
    justify-content: center;
    background: rgba(0, 0, 0, .2);
}

.dialog {
    display: flex;
    flex-direction: column;
    width: 510px;
    background: #fff;
    border: 1px solid #cbcbcb;
    border-radius: 5px;
    box-shadow: 0 5px 15px rgba(0, 0, 0, .2);
}

.dialog_head {
    display: flex;
    align-items: center;
    height: 34px;
    padding: 2px 11px 0 23px;
    background: #f7f7f7;
    border-bottom: 1px solid #cbcbcb;
    border-radius: 5px 5px 0 0;
}

.dialog_head h1 {
    flex: 1;
    font-size: 12px;
    text-align: center;
}

.close {
    color: #888;
}

.dialog_body {
    display: flex;
    min-height: 450px;
}

.dialog_menu {
    width: 161px;
    padding-top: 2px;
    border-right: 1px solid #dfdfdf;
}

.dialog_menu button {
    display: block;
    width: 100%;
    height: 32px;
    padding-left: 13px;
    font-weight: bold;
    text-align: left;
}

.dialog_menu .active {
    background: #cbcbcb;
}

.dialog_content {
    display: flex;
    flex: 1;
    gap: 14px;
    padding: 13px 20px;
}

.column {
    width: 144px;
    line-height: 15px;
}

.column > label {
    display: block;
}

.open {
    border-color: #848484;
}

.dropdown {
    position: absolute;
    top: 23px;
    left: -1px;
    z-index: 1;
    width: 140px;
    padding: 5px 0;
    background: #fff;
    border: 1px solid #cbcbcb;
    border-radius: 4px;
    box-shadow: 0 5px 15px rgba(0, 0, 0, .2);
    list-style: none;
}

.dropdown li {
    padding-left: 20px;
    line-height: 25px;
}

.dropdown .selected {
    background: #cbcbcb;
}

.labels_pos {
    margin: 24px 0 38px;
}

.separator {
    display: block;
    width: 100%;
    height: 22px;
    border: 1px solid #e5e5e5;
}

.checks {
    display: flex;
    flex-direction: column;
    gap: 10px;
    margin-top: 33px;
    color: #b2b2b2;
}

.checks label {
    display: flex;
    align-items: center;
    gap: 8px;
    height: 14px;
}

.checks input {
    appearance: none;
    width: 14px;
    height: 14px;
    border: 1px solid #dfdfdf;
    border-radius: 1px;
}

.dialog_foot {
    display: flex;
    justify-content: center;
    gap: 10px;
    padding: 14px 0 12px;
    border-top: 1px solid #dfdfdf;
}

.btn {
    width: 86px;
    height: 22px;
    border: 1px solid #c0c0c0;
    border-radius: 1px;
    font-weight: bold;
}

.btn.primary {
    background: #444;
    border-color: #444;
    color: #fff;
}
```
